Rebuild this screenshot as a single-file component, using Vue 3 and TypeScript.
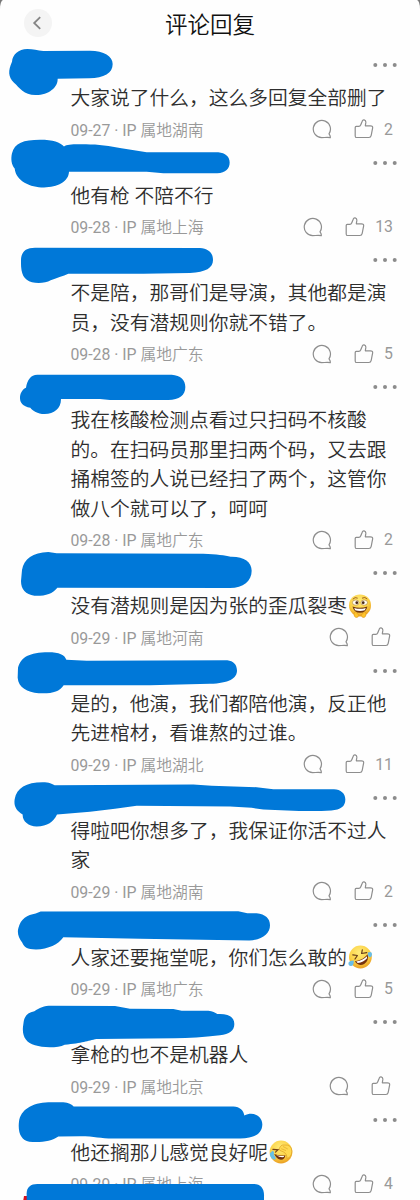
<script setup lang="ts">
type Emoji = 'grin' | 'rofl' | 'facepalm'

interface Comment {
  lines: string[]
  date: string
  place: string
  likes?: number
  emoji?: Emoji
  mask: string
  shift: number
}

const comments: Comment[] = [
  {
    lines: ['大家说了什么，这么多回复全部删了'],
    date: '09-27', place: '湖南', likes: 2, shift: -150,
    mask: 'M36 185C38 163 55 148 82 147C100 147 112 152 130 153L270 152C312 153 338 168 338 192C338 220 312 234 268 235L173 236C174 262 145 286 106 285C72 285 58 262 42 248C24 230 24 212 36 185Z',
  },
  {
    lines: ['他有枪 不陪不行'],
    date: '09-28', place: '上海', likes: 13, shift: -22.5,
    mask: 'M36 38C44 8 70 -2 120 -2C160 -2 180 6 192 18C205 10 225 11 285 12C340 17 390 29 440 35L655 35C676 37 689 48 689 66C689 84 677 98 652 98L490 98L440 94L207 94C206 124 172 140 132 141C90 141 48 122 44 84C34 72 32 55 36 38Z',
  },
  {
    lines: ['不是陪，那哥们是导演，其他都是演', '员，没有潜规则你就不错了。'],
    date: '09-28', place: '广东', likes: 5, shift: -15,
    mask: 'M63 62C63 36 76 23 105 23L600 24C625 26 639 38 639 60C639 84 618 96 570 99L430 101L205 101C190 108 168 114 152 121C138 130 112 131 96 127C70 119 62 100 63 62Z',
  },
  {
    lines: ['我在核酸检测点看过只扫码不核酸', '的。在扫码员那里扫两个码，又去跟', '捅棉签的人说已经扫了两个，这管你', '做八个就可以了，呵呵'],
    date: '09-28', place: '广东', likes: 2, shift: -21,
    mask: 'M78 68C82 45 92 29 112 29L515 29C542 31 556 44 556 66C556 91 538 104 505 105L330 105L300 102L183 102C183 132 162 146 134 147C112 147 98 137 91 128C68 125 59 113 60 96C61 82 69 72 78 68Z',
  },
  {
    lines: ['没有潜规则是因为张的歪瓜裂枣'],
    date: '09-29', place: '河南', emoji: 'grin', shift: -39,
    mask: 'M66 75C72 42 98 22 145 21L170 25L610 26C650 27 675 31 692 35C732 34 755 50 755 77C755 108 730 129 690 129L172 128C157 148 135 153 103 152C77 149 63 133 63 108Z',
  },
  {
    lines: ['是的，他演，我们都陪他演，反正他', '先进棺材，看谁熬的过谁。'],
    date: '09-29', place: '湖北', likes: 11, shift: -16.5,
    mask: 'M54 52C62 20 88 5 145 5C177 5 195 13 199 28L260 31L682 29C700 31 711 42 711 60C711 84 687 98 630 100L450 104L191 104C178 124 155 130 116 128C82 126 55 111 53 82Z',
  },
  {
    lines: ['得啦吧你想多了，我保证你活不过人', '家'],
    date: '09-29', place: '湖南', likes: 2, shift: -22.5,
    mask: 'M44 71C50 37 78 20 128 20C148 20 156 25 164 29L580 27L635 31L770 35L820 41L1002 41C1022 42 1036 53 1036 72C1036 93 1022 103 994 105C930 109 855 105 790 102L755 97L690 93L410 91L345 100L270 109L171 117C160 140 143 152 110 153C85 152 67 138 68 117C48 105 41 91 44 71Z',
  },
  {
    lines: ['人家还要拖堂呢，你们怎么敢的'],
    date: '09-29', place: '广东', likes: 5, emoji: 'rofl', shift: -28.5,
    mask: 'M55 83C62 55 82 43 107 39L122 33L715 32L742 38L770 38C796 41 810 53 810 74C810 101 786 117 748 120L420 115L190 110C175 132 145 145 108 147C81 147 72 140 67 127C56 112 51 99 55 83Z',
  },
  {
    lines: ['拿枪的也不是机器人'],
    date: '09-29', place: '北京', shift: -21,
    mask: 'M71 65C74 47 84 38 103 34C118 23 132 17 154 17L345 18L390 26L520 27L545 32L625 32C638 33 645 37 652 42C685 40 703 51 703 72C703 92 688 103 660 106C610 112 565 115 525 115L290 117C262 122 248 130 194 134C175 144 130 144 105 136C78 128 66 110 69 80Z',
  },
  {
    lines: ['他还搁那儿感觉良好呢'],
    date: '09-29', place: '上海', likes: 4, emoji: 'facepalm', shift: -28.5,
    mask: 'M57 78C62 42 96 22 145 20L190 20C205 21 216 26 221 33L700 33C720 34 731 45 733 60C759 47 787 61 787 87C786 115 765 127 720 129L340 129C300 129 285 122 240 122L175 123C155 137 125 142 88 139C63 134 53 111 57 78Z',
  },
]
</script>

<template>
  <div class="screen">
    <div class="sheet">
      <header class="header">
        <button class="back" aria-label="返回">
          <svg viewBox="0 0 28 28"><path d="M16.2 8.2 10.2 14l6 5.8" /></svg>
        </button>
        <h1>评论回复</h1>
      </header>

      <article v-for="(c, i) in comments" :key="i" class="comment">
        <div class="head">
          <svg class="mask" viewBox="0 0 1260 150">
            <path :d="c.mask" :transform="`translate(0 ${c.shift})`" />
          </svg>
          <svg class="more" viewBox="0 0 26 6">
            <circle cx="3.3" cy="3" r="2" /><circle cx="13" cy="3" r="2" /><circle cx="22.7" cy="3" r="2" />
          </svg>
        </div>
        <div class="body">
          <p v-for="(line, n) in c.lines" :key="n">
            <span class="line">{{ line }}</span>
            <svg v-if="c.emoji && n === c.lines.length - 1" class="emoji" viewBox="0 0 24 24">
              <defs>
                <radialGradient :id="'face' + i" cx="45%" cy="30%" r="72%">
                  <stop offset="0" stop-color="#ffec7a" /><stop offset=".62" stop-color="#fbd044" /><stop offset="1" stop-color="#e99b20" />
                </radialGradient>
              </defs>
              <g v-if="c.emoji === 'grin'">
                <circle cx="12" cy="11.4" r="11" :fill="`url(#face${i})`" />
                <path d="M4.8 5.2Q7 2.6 9.7 4.2M14 4.2Q17 2.4 19.2 5" fill="none" stroke="#935215" stroke-width=".9" />
                <ellipse cx="7.7" cy="8.6" rx="3.3" ry="2.6" fill="#fffdf0" stroke="#9b631c" stroke-width=".5" />
                <ellipse cx="16.2" cy="8.6" rx="3.3" ry="2.6" fill="#fffdf0" stroke="#9b631c" stroke-width=".5" />
                <circle cx="8.8" cy="8.7" r="1.4" fill="#4a2715" /><circle cx="15.2" cy="8.7" r="1.4" fill="#4a2715" />
                <path d="M4.5 12.4Q12 14.9 19.4 12.4Q18.2 18.7 12 18.8Q5.8 18.7 4.5 12.4Z" fill="#71370f" />
                <path d="M6.2 14Q12 15.7 17.8 14L16.8 16.2Q12 17.8 7.2 16.2Z" fill="#fff" />
                <path d="M6 19Q7.6 16.9 8.8 19L10.8 21.2Q10.5 23.8 8 23.6Q5.6 23 6 19ZM18 19Q16.4 16.9 15.2 19L13.2 21.2Q13.5 23.8 16 23.6Q18.4 23 18 19Z" fill="#ffc52b" stroke="#d98a18" stroke-width=".5" />
              </g>
              <g v-else-if="c.emoji === 'rofl'">
                <circle cx="12.4" cy="12" r="11.4" :fill="`url(#face${i})`" />
                <path d="M4.8 9.8 9.4 10.5 7 14M14.3 4.8 13.6 8.5 18.7 7.6" fill="none" stroke="#673b18" stroke-width="1.2" stroke-linecap="round" stroke-linejoin="round" />
                <path d="M6.8 16.2Q14.5 15.8 19.6 9.3Q21.4 15.4 16.2 18.9Q10.9 22 6.8 16.2Z" fill="#76310f" />
                <path d="M8.3 16.5Q15.2 15.4 19 11.3L19 13.3Q15.6 17.3 9.7 18Z" fill="#fff" />
                <path d="M5.8 15.4Q0 15.4.4 19Q1 21.8 4 20.8Q6 19.7 5.8 15.4ZM19.8 7.5Q23.9 6 24 9Q24 12.7 21 12Q19.3 11 19.8 7.5Z" fill="#69bde6" />
              </g>
              <g v-else>
                <circle cx="12" cy="12" r="11.4" :fill="`url(#face${i})`" />
                <path d="M3.9 9.3 9 9.8 6.5 12.1" fill="none" stroke="#754314" stroke-width="1.2" stroke-linecap="round" />
                <path d="M5.2 14.1Q10 16.2 16.4 15.2Q15.7 20.2 11 19.6Q7.5 18.9 5.2 14.1Z" fill="#71310e" />
                <path d="M7 15Q11.3 16.5 15.5 15.7L14.6 17.1Q10.8 17.6 7 15Z" fill="#fff" />
                <path d="M10.2 8.9Q11.4 4.4 15.6 5Q22.5 4.4 22.8 11.2Q22.5 17.7 17.8 18.3Q18.3 13.8 14.1 11.7Q10 10.8 10.2 8.9Z" fill="#ffd951" stroke="#dca126" stroke-width=".7" />
                <path d="M12.2 8.7 17 10.6M14 6.5 18.8 9" fill="none" stroke="#dca126" stroke-width=".6" />
                <path d="M3.9 10.4Q1 12.2.8 15Q2.8 20.3 6.3 19.5Q7.5 17.5 4.8 15Q5.8 12 3.9 10.4Z" fill="#68bfe5" />
              </g>
            </svg>
          </p>
        </div>
        <footer class="meta" :class="{ plain: c.likes === undefined }">
          <span class="info">{{ c.date }} · IP <span class="place">属地{{ c.place }}</span></span>
          <svg class="icon" viewBox="0 0 20 20">
            <path d="M17 14.8A8.6 8.6 0 1 0 9.7 18.6C12.6 18.6 15.2 18.2 18.3 18.6Q18.5 16.5 17 14.8Z" />
          </svg>
          <svg class="icon thumb" viewBox="0 0 20 20">
            <path d="M1.2 8.4C1.2 7.7 1.5 7.4 2.2 7.4H4.8C6 7.4 6.4 6.8 6.8 5.8L8.2 2.2C8.6 1.1 9.2.7 10.1.9C11.6 1.2 12 2.2 11.8 3.7L11.3 6.8H16.4C18.2 6.8 18.9 7.8 18.6 9.2L17.2 16.4C16.9 17.8 16.2 18.5 14.9 18.5H2.7C1.7 18.5 1.2 17.9 1.2 16.9Z" />
          </svg>
          <span v-if="c.likes !== undefined" class="count">{{ c.likes }}</span>
        </footer>
      </article>

      <div class="tail">
        <svg class="mask" viewBox="0 0 1260 150">
          <path class="alert" d="M72 -18H86V0H69Z" />
          <path d="M80 20V-26C80 -44 92 -54 112 -54H760C781 -54 792 -42 792 -20V20Z" />
        </svg>
      </div>
    </div>
  </div>
</template>

<style>
body {
  margin: 0;
  overflow: hidden;
}
</style>

<style scoped>
.screen {
  width: 420px;
  height: 1200px;
  overflow: hidden;
  background: #777;
  font-family: Roboto, "Noto Sans CJK SC", sans-serif;
}
.sheet {
  height: 1200px;
  background: #fefefe;
  border-radius: 3px 3px 0 0 / 9px 9px 0 0;
}
.header {
  display: grid;
  grid-template-columns: 52px 1fr 52px;
  align-items: center;
  height: 50px;
}
.back {
  width: 28px;
  height: 28px;
  margin: -4px 0 0 23.5px;
  padding: 0;
  border: 0;
  border-radius: 50%;
  background: #f4f4f4;
}
.back svg {
  display: block;
  fill: none;
  stroke: #858585;
  stroke-width: 1.8;
}
h1 {
  margin: 0;
  color: #111;
  font-size: 22.5px;
  font-weight: 350;
  line-height: 50px;
  text-align: center;
}
.head {
  position: relative;
  height: 33.25px;
  display: flex;
  justify-content: flex-end;
  padding-right: 22px;
}
.mask {
  position: absolute;
  z-index: 1;
  top: 0;
  left: 0;
  width: 420px;
  height: 50px;
  overflow: visible;
  fill: #0078d8;
  pointer-events: none;
}
.more {
  width: 26px;
  height: 6px;
  margin-top: 12px;
  fill: #8c8c8c;
}
.body {
  padding-left: 70.4px;
  color: #2e2e2e;
  font-size: 19.75px;
  font-weight: 350;
}
p {
  display: flex;
  align-items: center;
  height: 29.5px;
  margin: 0;
  line-height: 29.5px;
  white-space: nowrap;
}
.line {
  padding-top: 2px;
}
.emoji {
  width: 24px;
  height: 24px;
  margin: -1px 0 0 1.5px;
}
.meta {
  display: flex;
  align-items: center;
  height: 34.75px;
  box-sizing: border-box;
  padding: 0 27px 1.5px 70.4px;
  color: #999;
  font-size: 15.8px;
  font-weight: 400;
}
.meta.plain {
  padding-right: 29px;
}
.info {
  flex: 1;
  white-space: nowrap;
}
.place {
  font-weight: 350;
}
.icon {
  width: 20px;
  height: 20px;
  fill: none;
  stroke: #8e8e8e;
  stroke-width: 1.2;
  stroke-linejoin: round;
}
.thumb {
  margin-left: 22px;
}
.count {
  margin-left: 10px;
}
.tail {
  position: relative;
}
.alert {
  fill: #d90f1c;
}
</style>
